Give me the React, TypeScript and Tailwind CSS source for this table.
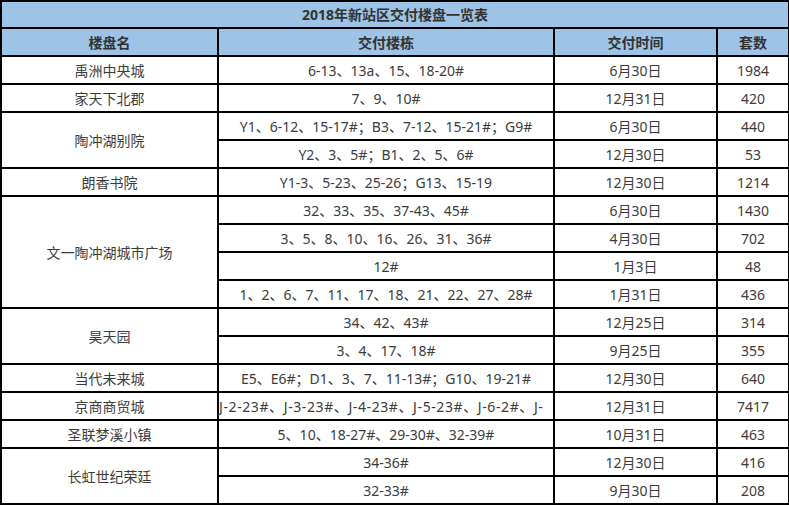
type Row = { name?: string; span?: number; units: string; date: string; count: string; left?: boolean };

const rows: Row[] = [
  { name: "禹洲中央城", span: 1, units: "6-13、13a、15、18-20#", date: "6月30日", count: "1984" },
  { name: "家天下北郡", span: 1, units: "7、9、10#", date: "12月31日", count: "420" },
  { name: "陶冲湖别院", span: 2, units: "Y1、6-12、15-17#；B3、7-12、15-21#；G9#", date: "6月30日", count: "440" },
  { units: "Y2、3、5#；B1、2、5、6#", date: "12月30日", count: "53" },
  { name: "朗香书院", span: 1, units: "Y1-3、5-23、25-26；G13、15-19", date: "12月30日", count: "1214" },
  { name: "文一陶冲湖城市广场", span: 4, units: "32、33、35、37-43、45#", date: "6月30日", count: "1430" },
  { units: "3、5、8、10、16、26、31、36#", date: "4月30日", count: "702" },
  { units: "12#", date: "1月3日", count: "48" },
  { units: "1、2、6、7、11、17、18、21、22、27、28#", date: "1月31日", count: "436" },
  { name: "昊天园", span: 2, units: "34、42、43#", date: "12月25日", count: "314" },
  { units: "3、4、17、18#", date: "9月25日", count: "355" },
  { name: "当代未来城", span: 1, units: "E5、E6#；D1、3、7、11-13#；G10、19-21#", date: "12月30日", count: "640" },
  { name: "京商商贸城", span: 1, units: "J-2-23#、J-3-23#、J-4-23#、J-5-23#、J-6-2#、J-", date: "12月31日", count: "7417", left: true },
  { name: "圣联梦溪小镇", span: 1, units: "5、10、18-27#、29-30#、32-39#", date: "10月31日", count: "463" },
  { name: "长虹世纪荣廷", span: 2, units: "34-36#", date: "12月30日", count: "416" },
  { units: "32-33#", date: "9月30日", count: "208" },
];

export default function App() {
  return (
    <div
      className="w-[789px] h-[505px] bg-white overflow-hidden text-[14px] text-[#3c3c3c]"
      style={{ fontFamily: '"Noto Sans", "Noto Sans CJK SC", sans-serif' }}
    >
      <table className="table-fixed border-collapse w-[788px]">
        <colgroup>
          <col className="w-[217px]" />
          <col className="w-[336px]" />
          <col className="w-[163px]" />
          <col className="w-[72px]" />
        </colgroup>
        <thead>
          <tr className="h-[27px] bg-[#9dc3e6]">
            <th colSpan={4} className="border-2 border-black text-center font-bold text-[#333] p-0">
              2018年新站区交付楼盘一览表
            </th>
          </tr>
          <tr className="h-[28px] bg-[#9dc3e6] text-[#333]">
            <th className="border-2 border-black font-bold p-0">楼盘名</th>
            <th className="border-2 border-black font-bold p-0">交付楼栋</th>
            <th className="border-2 border-black font-bold p-0">交付时间</th>
            <th className="border-2 border-black font-bold p-0">套数</th>
          </tr>
        </thead>
        <tbody>
          {rows.map((r, i) => (
            <tr key={i} className="h-[28px]">
              {r.name && (
                <td rowSpan={r.span} className="border-2 border-black text-center p-0">
                  {r.name}
                </td>
              )}
              <td
                className={
                  r.left
                    ? "border-2 border-black p-0 whitespace-nowrap text-left tracking-[0.6px]"
                    : "border-2 border-black p-0 whitespace-nowrap text-center"
                }
              >
                {r.units}
              </td>
              <td className="border-2 border-black text-center p-0">{r.date}</td>
              <td className="border-2 border-black text-center p-0">{r.count}</td>
            </tr>
          ))}
        </tbody>
      </table>
    </div>
  );
}
